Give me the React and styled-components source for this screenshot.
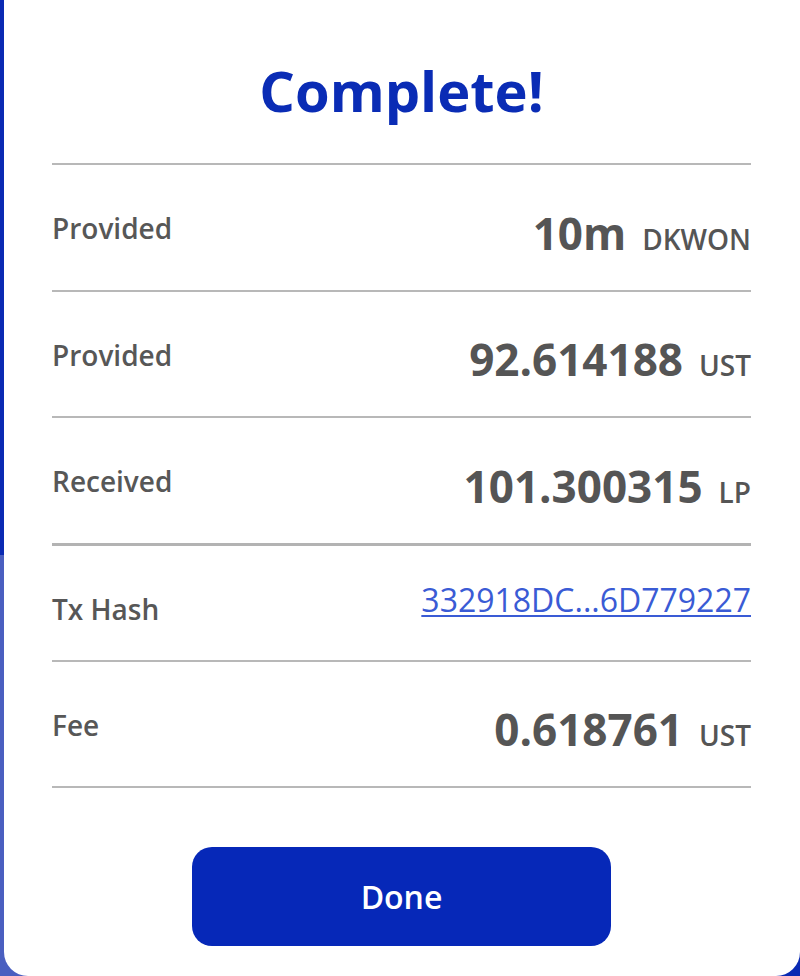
import styled, { createGlobalStyle } from "styled-components";

const Global = createGlobalStyle`
  html, body {
    margin: 0;
    padding: 0;
  }
  body {
    font-family: "Open Sans", "Noto Sans", sans-serif;
    background:
      linear-gradient(to bottom, #0a2ab3 0 555px, #4a5fc0 555px) left top / 50% 100% no-repeat,
      #0a2ab3;
    height: 976px;
    overflow: hidden;
  }
`;

const Card = styled.div`
  margin-left: 4px;
  width: 796px;
  height: 976px;
  box-sizing: border-box;
  background: #fff;
  border-radius: 0 0 24px 24px;
  padding: 52px 49px 0 48px;
  display: flex;
  flex-direction: column;
`;

const Title = styled.h1`
  margin: 0 0 35px;
  text-align: center;
  font-size: 56px;
  line-height: 76px;
  font-weight: 700;
  color: #0a2cb5;
`;

const List = styled.div`
  border-top: 2px solid #b8b8b8;
`;

const Row = styled.div`
  display: flex;
  justify-content: space-between;
  align-items: center;
  height: ${(p) => (p.$compact ? "114px" : "124.5px")};
  border-bottom: ${(p) => (p.$thick ? "3px solid #b3b3b3" : "2px solid #b8b8b8")};
`;

const Label = styled.span`
  font-size: 28px;
  line-height: 38px;
  font-weight: 600;
  color: #575757;
  margin-top: ${(p) => p.$shift || "2px"};
`;

const Value = styled.span`
  display: flex;
  align-items: baseline;
  gap: 16px;
  color: #555;
  margin-top: 11px;
`;

const Amount = styled.span`
  font-size: 44px;
  line-height: 60px;
  font-weight: 700;
`;

const Unit = styled.span`
  font-size: 28px;
  font-weight: 600;
`;

const Hash = styled.a`
  font-size: 32px;
  line-height: 44px;
  color: #3a5bd5;
  text-decoration: underline;
  text-underline-offset: 3px;
  text-decoration-thickness: 2px;
  margin-top: -6px;
`;

const Button = styled.button`
  align-self: center;
  margin-top: 59px;
  width: 419px;
  height: 99px;
  border: none;
  border-radius: 20px;
  background: #0628b8;
  color: #fff;
  font-family: inherit;
  font-size: 32px;
  font-weight: 600;
  cursor: pointer;
`;

const rows = [
  { label: "Provided", amount: "10m", unit: "DKWON" },
  { label: "Provided", amount: "92.614188", unit: "UST" },
  { label: "Received", amount: "101.300315", unit: "LP", thick: true },
];

export default function App() {
  return (
    <>
      <Global />
      <Card>
        <Title>Complete!</Title>
        <List>
          {rows.map((r, i) => (
            <Row key={i} $thick={r.thick}>
              <Label>{r.label}</Label>
              <Value>
                <Amount>{r.amount}</Amount>
                <Unit>{r.unit}</Unit>
              </Value>
            </Row>
          ))}
          <Row $compact>
            <Label $shift="12px">Tx Hash</Label>
            <Hash href="#">332918DC...6D779227</Hash>
          </Row>
          <Row>
            <Label>Fee</Label>
            <Value>
              <Amount>0.618761</Amount>
              <Unit>UST</Unit>
            </Value>
          </Row>
        </List>
        <Button>Done</Button>
      </Card>
    </>
  );
}
